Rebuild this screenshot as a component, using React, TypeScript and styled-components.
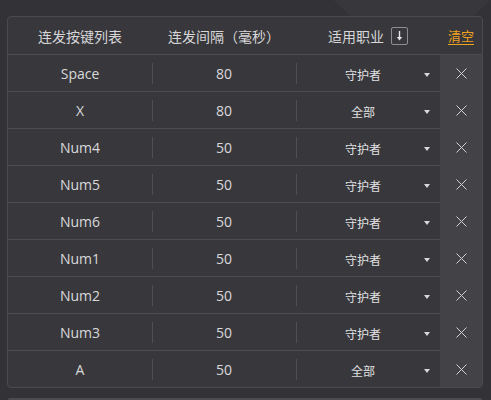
import React from "react";
import styled, { createGlobalStyle } from "styled-components";

const GlobalStyle = createGlobalStyle`
  html, body { margin: 0; padding: 0; background: #333337; }
  body { font-family: "Open Sans", "Noto Sans CJK SC", sans-serif; }
  * { box-sizing: border-box; }
`;

const Page = styled.div`
  position: relative;
  width: 491px;
  height: 400px;
  overflow: hidden;
  padding: 16px 8px 0 7px;
  background: #333337;
`;

const Glow = styled.div`
  position: absolute;
  left: 309px;
  top: -170px;
  width: 206px;
  height: 206px;
  border-radius: 50%;
  background: #38383c;
  pointer-events: none;
`;

const Panel = styled.div`
  position: relative;
  width: 476px;
  border: 1px solid #4a4a4f;
  border-radius: 4px;
  background: #38383c;
  overflow: hidden;
`;

const NextPanel = styled.div`
  position: relative;
  margin-top: 10px;
  width: 476px;
  height: 20px;
  border-top: 2px solid #4c4c50;
  border-left: 1px solid #4a4a4f;
  border-right: 1px solid #4a4a4f;
  border-radius: 4px 4px 0 0;
  background: #38383c;
`;

const Header = styled.div`
  display: grid;
  grid-template-columns: 144px 144px 144px 42px;
  height: 38px;
  border-bottom: 1px solid #4b4b50;
  align-items: center;
  font-family: "Noto Sans CJK SC", sans-serif;
  font-size: 14px;
  color: #d6d6d8;
`;

const HeadCell = styled.div`
  display: flex;
  align-items: center;
  justify-content: center;
  gap: 7px;
`;

const ClearLink = styled.a`
  color: #f0a11e;
  text-decoration: underline;
  text-underline-offset: 3px;
  font-size: 13px;
  cursor: pointer;
`;

const SortBox = styled.span`
  display: inline-flex;
  width: 17px;
  height: 18px;
  border: 1px solid #8e8e92;
  border-radius: 2px;
  align-items: center;
  justify-content: center;
`;

const Row = styled.div`
  display: grid;
  grid-template-columns: 432px 42px;
`;

const Main = styled.div<{ $last?: boolean }>`
  display: grid;
  grid-template-columns: 144px 144px 144px;
  height: ${(p) => (p.$last ? "36px" : "37px")};
  border-bottom: ${(p) => (p.$last ? "none" : "1px solid #4b4b50")};
  align-items: center;
  color: #d9d9db;
`;

const Cell = styled.div<{ $divider?: boolean }>`
  position: relative;
  height: 100%;
  display: flex;
  align-items: center;
  justify-content: center;
  font-size: 14px;
  padding-top: 1px;
  &::before {
    content: "";
    display: ${(p) => (p.$divider ? "block" : "none")};
    position: absolute;
    left: 0;
    top: 8px;
    width: 1px;
    height: 21px;
    background: #4e4e53;
  }
`;

const SelectCell = styled(Cell)`
  justify-content: space-between;
  padding-left: 6px;
  padding-right: 10px;
  padding-top: 3px;
`;

const SelectText = styled.span`
  flex: 1;
  text-align: center;
  font-family: "Noto Sans CJK SC", sans-serif;
  font-size: 12px;
  color: #e0e0e2;
`;

const Caret = styled.span`
  width: 0;
  height: 0;
  border-left: 3.5px solid transparent;
  border-right: 3.5px solid transparent;
  border-top: 4px solid #d9d9db;
  margin-top: 1px;
`;

const DeleteCell = styled.div`
  background: #434347;
  display: flex;
  align-items: center;
  justify-content: center;
  cursor: pointer;
`;

const rows = [
  { key: "Space", interval: 80, job: "守护者" },
  { key: "X", interval: 80, job: "全部" },
  { key: "Num4", interval: 50, job: "守护者" },
  { key: "Num5", interval: 50, job: "守护者" },
  { key: "Num6", interval: 50, job: "守护者" },
  { key: "Num1", interval: 50, job: "守护者" },
  { key: "Num2", interval: 50, job: "守护者" },
  { key: "Num3", interval: 50, job: "守护者" },
  { key: "A", interval: 50, job: "全部" },
];

const CloseIcon = () => (
  <svg width="11" height="11" viewBox="0 0 11 11">
    <path d="M0.5 0.5 L10.5 10.5 M10.5 0.5 L0.5 10.5" stroke="#d0d0d2" strokeWidth="1" fill="none" />
  </svg>
);

const SortIcon = () => (
  <svg width="9" height="12" viewBox="0 0 9 12">
    <path d="M4.5 1 V9" stroke="#e6e6e8" strokeWidth="1.4" />
    <path d="M1.8 7 L4.5 10.5 L7.2 7 Z" fill="#e6e6e8" />
  </svg>
);

export default function App() {
  return (
    <>
      <GlobalStyle />
      <Page>
        <Glow />
        <Panel>
          <Header>
            <HeadCell>连发按键列表</HeadCell>
            <HeadCell>连发间隔（毫秒）</HeadCell>
            <HeadCell>
              适用职业
              <SortBox>
                <SortIcon />
              </SortBox>
            </HeadCell>
            <HeadCell>
              <ClearLink>清空</ClearLink>
            </HeadCell>
          </Header>
          {rows.map((r, i) => (
            <Row key={r.key}>
              <Main $last={i === rows.length - 1}>
                <Cell>{r.key}</Cell>
                <Cell $divider>{r.interval}</Cell>
                <SelectCell $divider>
                  <SelectText>{r.job}</SelectText>
                  <Caret />
                </SelectCell>
              </Main>
              <DeleteCell>
                <CloseIcon />
              </DeleteCell>
            </Row>
          ))}
        </Panel>
        <NextPanel />
      </Page>
    </>
  );
}
